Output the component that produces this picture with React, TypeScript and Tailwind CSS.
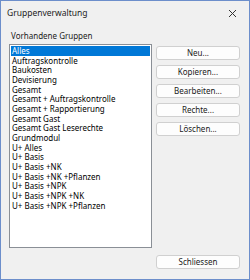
const groups = [
  "Alles",
  "Auftragskontrolle",
  "Baukosten",
  "Devisierung",
  "Gesamt",
  "Gesamt + Auftragskontrolle",
  "Gesamt + Rapportierung",
  "Gesamt Gast",
  "Gesamt Gast Leserechte",
  "Grundmodul",
  "U+ Alles",
  "U+ Basis",
  "U+ Basis +NK",
  "U+ Basis +NK +Pflanzen",
  "U+ Basis +NPK",
  "U+ Basis +NPK +NK",
  "U+ Basis +NPK +Pflanzen",
];

const actions = ["Neu...", "Kopieren...", "Bearbeiten...", "Rechte...", "Löschen..."];

function DialogButton({ label }: { label: string }) {
  return (
    <button className="flex h-[14px] w-[84px] items-center justify-center rounded-[3px] border border-[#d0d0d0] bg-[#fdfdfd] text-[8px] leading-none text-[#1b1b1b]">
      {label}
    </button>
  );
}

export default function App() {
  return (
    <div
      className="flex h-[280px] w-[250px] flex-col border border-[#6c8ecb] bg-[#f0f0f0] text-[8px] text-black"
      style={{ fontFamily: '"Noto Sans", "Open Sans", sans-serif' }}
    >
      <div className="flex h-[25px] shrink-0 items-center justify-between pl-[6px] pr-[12px]">
        <span className="text-[8.5px] text-[#1b1b1b]">Gruppenverwaltung</span>
        <svg width="9" height="9" viewBox="0 0 9 9" className="text-[#333]">
          <path d="M1 1L8 8M8 1L1 8" stroke="currentColor" strokeWidth="1" />
        </svg>
      </div>

      <div className="flex flex-1 flex-col px-[8px]">
        <div className="mt-[5px] pl-[2px] leading-[10px] text-[#1b1b1b]">Vorhandene Gruppen</div>

        <div className="mt-[3px] flex items-start gap-[4px]">
          <div className="h-[204px] w-[143px] border border-[#8a8f96] bg-white p-[1px]">
            {groups.map((g, i) => (
              <div
                key={g}
                className={
                  i === 0
                    ? "flex h-[9.7px] items-center bg-[#0078d7] px-[1px] text-white"
                    : "flex h-[9.7px] items-center px-[1px]"
                }
              >
                {g}
              </div>
            ))}
          </div>

          <div className="mt-[2px] flex flex-col gap-[5px]">
            {actions.map((a) => (
              <DialogButton key={a} label={a} />
            ))}
          </div>
        </div>

        <div className="mt-[7px] flex justify-end pr-[1px]">
          <DialogButton label="Schliessen" />
        </div>
      </div>
    </div>
  );
}
